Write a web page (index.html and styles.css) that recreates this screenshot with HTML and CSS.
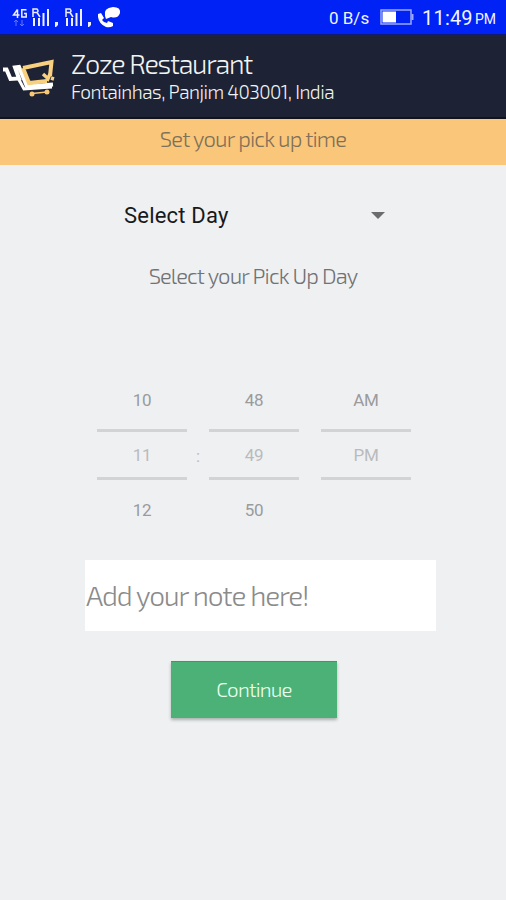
FILE: index.html
```html
<!DOCTYPE html>
<html lang="en">
<head>
<meta charset="utf-8">
<title>Set your pick up time</title>
<link rel="stylesheet" href="styles.css">
</head>
<body>
<div class="status">
  <svg class="signals" width="122" height="34" viewBox="0 0 122 34">
    <g fill="none" stroke="#eef0ff" stroke-width="1.5">
      <path d="M17.500 9.500L13.500 15H19.500M17.500 9.500V18M26.500 9.700H21.800V17H26.200V13.500H24"/>
      <path d="M33 17V9H37Q39 11 37 12.500H33M37 12.500L40 17M66 17V9H70Q72 11 70 12.500H66M70 12.500L73 17"/>
    </g>
    <g fill="none" stroke="#eef0ff" stroke-width="2">
      <path d="M34 18V26M39 18V26M43.500 13V26M48 9V26M67 18V26M72 18V26M76.500 13V26M81 9V26"/>
    </g>
    <g fill="#eef0ff"><path d="M55 22h3v3l-2 2h-1zM88 22h3v3l-2 2h-1z"/></g>
    <path d="M16 20V26M14 22L16 20L18 22M22 20V26M20 24L22 26L24 24" fill="none" stroke="#6577ff"/>
    <path d="M98 14l3-1 3 5-2 2q2 3 5 3l1-2 5 2v3q-3 2-7 1-7-3-8-10z" fill="#fff"/>
    <path d="M106 19l-1-3q-2-8 8-9 8 0 7 6-2 6-9 4z" fill="#fff"/>
  </svg>
  <span class="speed">0 B/s</span>
  <svg class="battery" width="34" height="18" viewBox="0 0 34 18"><rect x="1" y="2" width="30" height="14" fill="none" stroke="#9ba9ff" stroke-width="1.500"/><path d="M2.500 3.500H16V14.500H2.500Z" fill="#fff"/><path d="M32.500 6V12" stroke="#9ba9ff" stroke-width="2"/></svg>
  <span class="clock">11:49</span><span class="meridiem">PM</span>
</div>
<header class="header">
  <svg class="logo" width="60" height="50" viewBox="0 0 60 50">
    <path d="M3 19.500H6.500L10.500 29L19 28.500L15 17.500L19 17L27 36.500L53 34.500" fill="none" stroke="#fff" stroke-width="4"/>
    <path d="M18 28L24 39L52 37" fill="none" stroke="#fff" stroke-width="3"/>
    <path d="M23 18L51.500 12L50 26M23 18L29 33L47 31" fill="none" stroke="#f8d080" stroke-width="4"/>
    <path d="M43 24L48.500 29M50 24L47 31M51 28L54 29" fill="none" stroke="#f8d080" stroke-width="3.500"/>
    <path d="M32 43.500L47 42" fill="none" stroke="#f8c875" stroke-width="1.500"/>
    <circle cx="32" cy="44" r="2.500" fill="#f8c875"/><circle cx="47" cy="42" r="2.500" fill="#f8c875"/>
  </svg>
  <div class="place"><div class="name">Zoze Restaurant</div><div class="address">Fontainhas, Panjim 403001, India</div></div>
</header>
<div class="banner"><span>Set your pick up time</span></div>
<main>
  <div class="select"><span class="day">Select Day</span><i class="caret"></i></div>
  <div class="hint"><span>Select your Pick Up Day</span></div>
  <div class="picker">
    <div class="column"><div>10</div><div class="current">11</div><div>12</div></div>
    <div class="colon">:</div>
    <div class="column"><div>48</div><div class="current">49</div><div>50</div></div>
    <div></div>
    <div class="column"><div>AM</div><div class="current">PM</div><div></div></div>
  </div>
  <div class="note"><span>Add your note here!</span></div>
  <div class="button"><span>Continue</span></div>
</main>
</body>
</html>
```
FILE: styles.css
```css
*{box-sizing:border-box}
body{margin:0;width:506px;height:900px;background:#eff0f2;font-family:Roboto,"Liberation Sans",sans-serif;overflow:hidden;white-space:nowrap}
.status{height:35px;background:#0022f4;border-bottom:1px solid #101a70;display:flex;color:#f2f4ff;line-height:36px}
.signals{flex:none;margin-right:207px}
.speed{font-size:17px;width:51px}
.battery{margin-top:8px;width:34px;margin-right:8px}
.clock{font-size:20px;letter-spacing:.2px;width:53px}
.meridiem{font-size:14px;line-height:39px}
.header{height:84px;background:#1d2235;border-bottom:2px solid #11131f;display:flex;color:#f1f4f2}
.header,.banner,.hint,.note,.button{font-family:"Exo 2",Exo,Roboto,sans-serif;font-weight:300}
.logo{margin-top:15px;flex:none}
.place{margin-left:11px;padding-top:12px}
.name{font-size:27px;line-height:32px;letter-spacing:-1.25px}
.address{font-size:19px;line-height:25px;letter-spacing:-.52px}
.banner{height:46px;background:#fac67a;text-align:center;color:#7f7059;font-size:22px;line-height:39px;letter-spacing:-.85px}
.select{height:100px;display:flex;align-items:center;justify-content:space-between;margin:0 121px 0 124px;color:#18191b;font-size:22px;letter-spacing:.2px}
.caret{border:7px solid transparent;border-top-color:#6b6c6e;border-bottom:0}
.hint{height:22px;line-height:21px;text-align:center;font-size:22px;color:#707274;letter-spacing:-.9px}
.picker{margin:86px 0 0 97px;display:grid;grid-template-columns:90px 22px 90px 22px 90px;height:165px;color:#999b9d;font-size:17px;letter-spacing:-.2px;text-align:center}
.column{display:grid;grid-template-rows:56px 51px 58px;line-height:54px}
.column div:last-child{line-height:61px}
.column .current{border-top:3px solid #d1d3d5;border-bottom:3px solid #d1d3d5;color:#b9bbbd;line-height:46px}
.colon{line-height:166px;color:#bbbdbf}
.note{margin:22px 70px 0 85px;height:71px;background:#fff;line-height:70px;font-size:28px;color:#8b8b8b;padding-left:1px;letter-spacing:-1.2px}
.button{width:166px;height:57px;margin:30px 0 0 171px;background:#4cb176;border-top:1px solid #35a05e;box-shadow:0 2px 3px #a9b0ad;text-align:center;line-height:55px;color:#e9fff0;font-size:20.5px;letter-spacing:-.8px}
```
